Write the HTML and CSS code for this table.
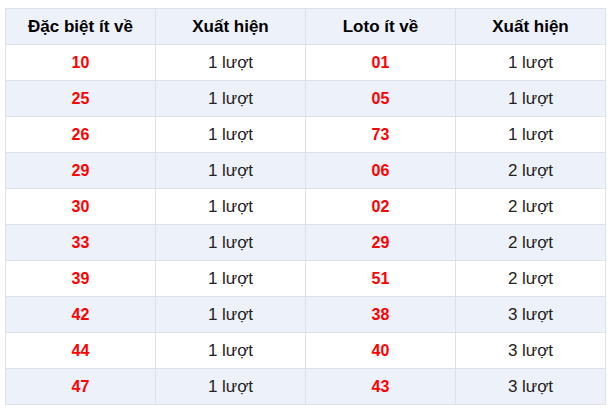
FILE: index.html
```html
<!DOCTYPE html>
<html lang="vi">
<head>
<meta charset="utf-8">
<link rel="stylesheet" href="styles.css">
</head>
<body>
<table class="stats">
  <thead>
    <tr><th>Đặc biệt ít về</th><th>Xuất hiện</th><th>Loto ít về</th><th>Xuất hiện</th></tr>
  </thead>
  <tbody>
    <tr><td class="num">10</td><td>1 lượt</td><td class="num">01</td><td>1 lượt</td></tr>
    <tr><td class="num">25</td><td>1 lượt</td><td class="num">05</td><td>1 lượt</td></tr>
    <tr><td class="num">26</td><td>1 lượt</td><td class="num">73</td><td>1 lượt</td></tr>
    <tr><td class="num">29</td><td>1 lượt</td><td class="num">06</td><td>2 lượt</td></tr>
    <tr><td class="num">30</td><td>1 lượt</td><td class="num">02</td><td>2 lượt</td></tr>
    <tr><td class="num">33</td><td>1 lượt</td><td class="num">29</td><td>2 lượt</td></tr>
    <tr><td class="num">39</td><td>1 lượt</td><td class="num">51</td><td>2 lượt</td></tr>
    <tr><td class="num">42</td><td>1 lượt</td><td class="num">38</td><td>3 lượt</td></tr>
    <tr><td class="num">44</td><td>1 lượt</td><td class="num">40</td><td>3 lượt</td></tr>
    <tr><td class="num">47</td><td>1 lượt</td><td class="num">43</td><td>3 lượt</td></tr>
  </tbody>
</table>
</body>
</html>
```
FILE: styles.css
```css
html, body {
  margin: 0;
  padding: 0;
  background: #fff;
}
body {
  padding: 8px 5px;
  font-family: "Liberation Sans", Arial, sans-serif;
  font-size: 17px;
  color: #222;
}
.stats {
  border-collapse: collapse;
  width: 601px;
  table-layout: fixed;
}
.stats th,
.stats td {
  border: 1px solid #dde1e8;
  height: 35px;
  padding: 0;
  text-align: center;
  vertical-align: middle;
}
.stats th {
  background: #edf1f9;
  font-weight: bold;
  color: #000;
}
.stats tbody tr:nth-child(even) td {
  background: #edf1f9;
}
.stats td.num {
  color: #ff0000;
  font-weight: bold;
  font-size: 16px;
}
```
